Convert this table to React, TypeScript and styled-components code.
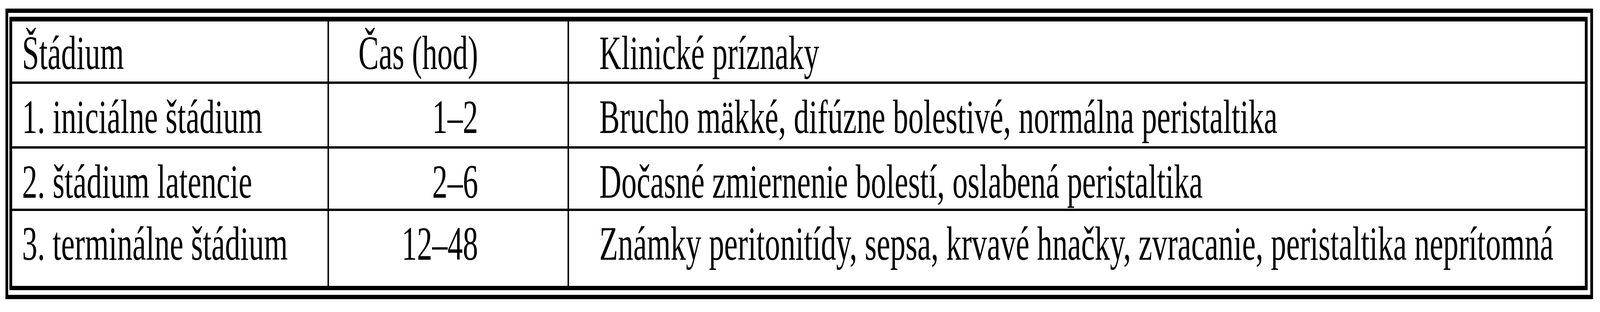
import React from "react";
import styled, { createGlobalStyle } from "styled-components";

const DESIGN_WIDTH = 6439;

const GlobalStyle = createGlobalStyle`
  html, body {
    margin: 0;
    padding: 0;
    background: #fff;
    overflow: hidden;
  }
  body {
    font-family: "Liberation Serif", "Times New Roman", serif;
    color: #000;
  }
`;

const Viewport = styled.div`
  width: 100vw;
  height: 800px;
  overflow: hidden;
`;

// the sheet is laid out at the design width; it is squeezed to the window width at run time
const Sheet = styled.div`
  width: ${DESIGN_WIDTH}px;
  height: 800px;
  padding: 22px 0 0 22px;
  box-sizing: border-box;
  transform-origin: 0 0;
`;

const OuterFrame = styled.div`
  width: 6389px;
  box-sizing: border-box;
  border: 11px solid #000;
  padding: 10px 11px 12px 5px;
`;

const InnerFrame = styled.div`
  border: 11px solid #000;
  border-top-width: 12px;
  display: grid;
  grid-template-columns: 1269px 960px 1fr;
  grid-template-rows: 154px 160px 154px 192px;
  gap: 6px;
  background: #000;
`;

const Cell = styled.div<{ $align?: "left" | "right"; $pad: string; $top: number }>`
  background: #fff;
  min-width: 0;
  font-family: "Liberation Serif", "Times New Roman", serif;
  font-size: 123px;
  line-height: 123px;
  white-space: nowrap;
  text-align: ${(p) => p.$align ?? "left"};
  padding: ${(p) => p.$top}px ${(p) => p.$pad};
  box-sizing: border-box;
  overflow: hidden;
`;

type Row = { stage: string; time: string; signs: string; top: number };

const header: Row = {
  stage: "Štádium",
  time: "Čas (hod)",
  signs: "Klinické príznaky",
  top: 19,
};

const rows: Row[] = [
  {
    stage: "1. iniciálne štádium",
    time: "1–2",
    signs: "Brucho mäkké, difúzne bolestivé, normálna peristaltika",
    top: 23,
  },
  {
    stage: "2. štádium latencie",
    time: "2–6",
    signs: "Dočasné zmiernenie bolestí, oslabená peristaltika",
    top: 23,
  },
  {
    stage: "3. terminálne štádium",
    time: "12–48",
    signs:
      "Známky peritonitídy, sepsa, krvavé hnačky, zvracanie, peristaltika neprítomná",
    top: 22,
  },
];

const renderRow = (row: Row, i: number) => (
  <React.Fragment key={i}>
    <Cell $top={row.top} $pad="0 0 40px">
      {row.stage}
    </Cell>
    <Cell $top={row.top} $pad="360px 0 0" $align="right">
      {row.time}
    </Cell>
    <Cell $top={row.top} $pad="0 0 122px">
      {row.signs}
    </Cell>
  </React.Fragment>
);

const App = () => {
  const width = typeof window !== "undefined" ? window.innerWidth : DESIGN_WIDTH;
  const squeeze = Math.min(1, width / DESIGN_WIDTH);

  return (
    <Viewport>
      <GlobalStyle />
      <Sheet style={{ transform: `scaleX(${squeeze})` }}>
        <OuterFrame>
          <InnerFrame>
            {[header, ...rows].map((row, i) => renderRow(row, i))}
          </InnerFrame>
        </OuterFrame>
      </Sheet>
    </Viewport>
  );
};

export default App;
